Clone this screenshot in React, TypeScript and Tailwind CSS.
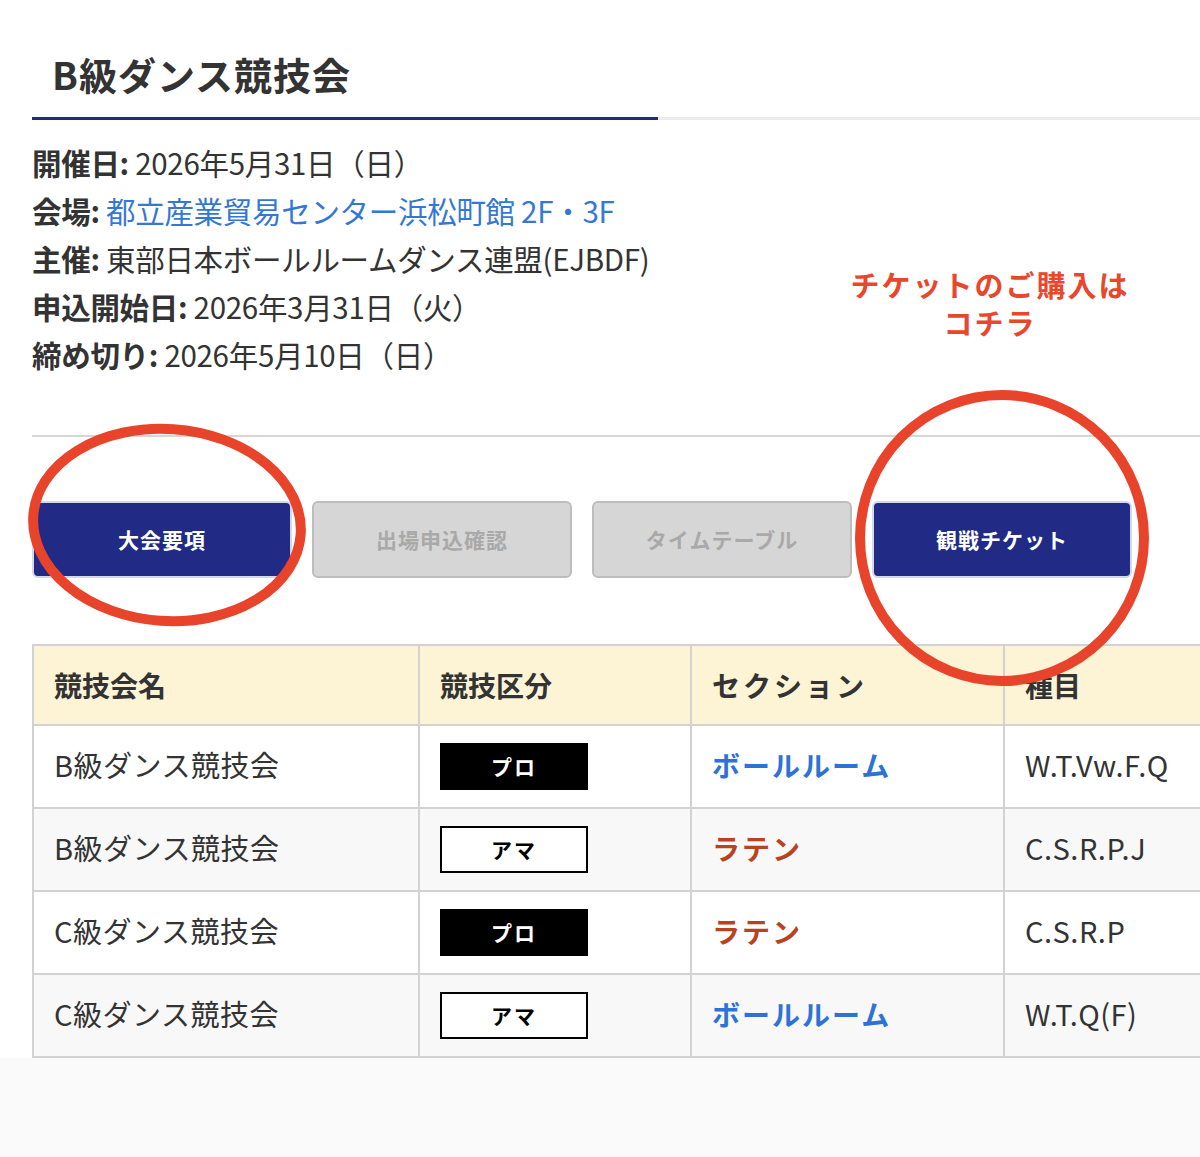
import React from "react";

const font = "font-['Noto_Sans_CJK_JP','Noto_Sans',sans-serif]";

const info = [
  { label: "開催日:", value: "2026年5月31日（日）" },
  { label: "会場:", value: "都立産業貿易センター浜松町館 2F・3F", link: true },
  { label: "主催:", value: "東部日本ボールルームダンス連盟(EJBDF)" },
  { label: "申込開始日:", value: "2026年3月31日（火）" },
  { label: "締め切り:", value: "2026年5月10日（日）" },
];

const rows = [
  { name: "B級ダンス競技会", kind: "プロ", section: "ボールルーム", events: "W.T.Vw.F.Q" },
  { name: "B級ダンス競技会", kind: "アマ", section: "ラテン", events: "C.S.R.P.J" },
  { name: "C級ダンス競技会", kind: "プロ", section: "ラテン", events: "C.S.R.P" },
  { name: "C級ダンス競技会", kind: "アマ", section: "ボールルーム", events: "W.T.Q(F)" },
];

const tabs = [
  { label: "大会要項", active: true },
  { label: "出場申込確認", active: false },
  { label: "タイムテーブル", active: false },
  { label: "観戦チケット", active: true },
];

export default function App() {
  return (
    <div className={`relative min-h-[1157px] w-[1200px] overflow-hidden bg-[#fafafa] text-[#333] ${font}`}>
      <div className="bg-white pl-[32px] pt-[44px] pb-0">
        {/* Title */}
        <div className="border-b-[3px] border-[#ececec]">
          <h1 className="-mb-[3px] w-[626px] border-b-[3px] border-[#232a82] px-[20px] pb-[13px] text-[38px] font-bold leading-[60px] tracking-[1px]">
            B級ダンス競技会
          </h1>
        </div>

        {/* Info */}
        <div className="mt-[18px]">
          {info.map((it) => (
            <p key={it.label} className="text-[29.5px] leading-[48px] tracking-[-0.3px]">
              <span className="font-bold">{it.label}</span>{" "}
              <span className={it.link ? "text-[#3478d4]" : ""}>{it.value}</span>
            </p>
          ))}
        </div>

        <hr className="mt-[57px] border-0 border-t-2 border-[#d6d6d6]" />

        {/* Tabs */}
        <div className="mt-[64px] flex gap-[20px]">
          {tabs.map((t) => (
            <div
              key={t.label}
              className={
                t.active
                  ? "flex h-[77px] w-[260px] items-center justify-center rounded-[6px] border-2 border-[#d5d7ea] bg-[#212a84] text-[21px] font-bold tracking-[1px] text-white"
                  : "flex h-[77px] w-[260px] items-center justify-center rounded-[6px] border-2 border-[#bdbdbd] bg-[#d6d6d6] text-[21px] font-bold tracking-[1px] text-[#a9a9a9]"
              }
            >
              {t.label}
            </div>
          ))}
        </div>

        {/* Table */}
        <table className="mt-[66px] w-[1300px] table-fixed border-collapse border-2 border-[#d2d2d2]">
          <colgroup>
            <col className="w-[386px]" />
            <col className="w-[272px]" />
            <col className="w-[313px]" />
            <col className="w-[329px]" />
          </colgroup>
          <thead>
            <tr className="h-[80px] bg-[#fdf4d6] text-left text-[28px] font-bold">
              <th className="border-2 border-[#d2d2d2] pl-[20px] font-bold">競技会名</th>
              <th className="border-2 border-[#d2d2d2] pl-[20px] font-bold">競技区分</th>
              <th className="border-2 border-[#d2d2d2] pl-[20px] font-bold tracking-[3px]">セクション</th>
              <th className="border-2 border-[#d2d2d2] pl-[20px] font-bold">種目</th>
            </tr>
          </thead>
          <tbody>
            {rows.map((r, i) => (
              <tr key={i} className={`h-[83px] text-[29px] ${i % 2 === 1 ? "bg-[#f8f8f8]" : "bg-white"}`}>
                <td className="border-2 border-[#d2d2d2] pl-[20px] pb-[4px] tracking-[0.5px]">{r.name}</td>
                <td className="border-2 border-[#d2d2d2] pl-[20px]">
                  <div
                    className={
                      r.kind === "プロ"
                        ? "flex h-[47px] w-[148px] items-center justify-center bg-black text-[21px] font-bold tracking-[2px] text-white"
                        : "flex h-[47px] w-[148px] items-center justify-center border-2 border-black bg-white text-[21px] font-bold tracking-[2px] text-black"
                    }
                  >
                    {r.kind}
                  </div>
                </td>
                <td
                  className={`border-2 border-[#d2d2d2] pl-[20px] pb-[4px] text-[28px] font-bold tracking-[2px] ${
                    r.section === "ラテン" ? "text-[#b8431f]" : "text-[#2f72d6]"
                  }`}
                >
                  {r.section}
                </td>
                <td className="border-2 border-[#d2d2d2] pl-[20px] pb-[4px] tracking-[0.5px]">{r.events}</td>
              </tr>
            ))}
          </tbody>
        </table>
      </div>

      {/* Red annotation */}
      <div className="absolute left-[790px] top-[265px] w-[400px] text-center text-[29px] font-bold leading-[38px] tracking-[2px] text-[#e8472e]">
        チケットのご購入は
        <br />
        コチラ
      </div>
      <svg className="pointer-events-none absolute left-0 top-0" width="1200" height="1157" aria-hidden="true">
        <ellipse cx="167" cy="525" rx="134" ry="96" fill="none" stroke="#e8432b" strokeWidth="10" transform="rotate(4 167 525)" />
        <ellipse cx="1002" cy="538" rx="142" ry="143" fill="none" stroke="#e8432b" strokeWidth="10" />
      </svg>
    </div>
  );
}
